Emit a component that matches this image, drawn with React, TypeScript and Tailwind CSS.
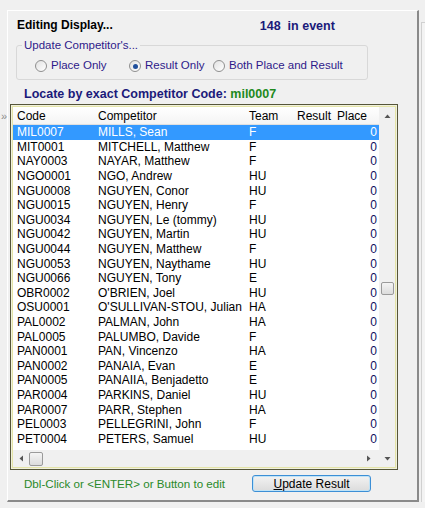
import React from 'react';

type Row = { code: string; name: string; team: string };

const rows: Row[] = [
  { code: 'MIL0007', name: 'MILLS, Sean', team: 'F' },
  { code: 'MIT0001', name: 'MITCHELL, Matthew', team: 'F' },
  { code: 'NAY0003', name: 'NAYAR, Matthew', team: 'F' },
  { code: 'NGO0001', name: 'NGO, Andrew', team: 'HU' },
  { code: 'NGU0008', name: 'NGUYEN, Conor', team: 'HU' },
  { code: 'NGU0015', name: 'NGUYEN, Henry', team: 'F' },
  { code: 'NGU0034', name: 'NGUYEN, Le (tommy)', team: 'HU' },
  { code: 'NGU0042', name: 'NGUYEN, Martin', team: 'HU' },
  { code: 'NGU0044', name: 'NGUYEN, Matthew', team: 'F' },
  { code: 'NGU0053', name: 'NGUYEN, Naythame', team: 'HU' },
  { code: 'NGU0066', name: 'NGUYEN, Tony', team: 'E' },
  { code: 'OBR0002', name: "O'BRIEN, Joel", team: 'HU' },
  { code: 'OSU0001', name: "O'SULLIVAN-STOU, Julian", team: 'HA' },
  { code: 'PAL0002', name: 'PALMAN, John', team: 'HA' },
  { code: 'PAL0005', name: 'PALUMBO, Davide', team: 'F' },
  { code: 'PAN0001', name: 'PAN, Vincenzo', team: 'HA' },
  { code: 'PAN0002', name: 'PANAIA, Evan', team: 'E' },
  { code: 'PAN0005', name: 'PANAIIA, Benjadetto', team: 'E' },
  { code: 'PAR0004', name: 'PARKINS, Daniel', team: 'HU' },
  { code: 'PAR0007', name: 'PARR, Stephen', team: 'HA' },
  { code: 'PEL0003', name: 'PELLEGRINI, John', team: 'F' },
  { code: 'PET0004', name: 'PETERS, Samuel', team: 'HU' },
];

const Radio: React.FC<{ checked?: boolean; label: string; className?: string }> = ({ checked, label, className }) => (
  <label className={`flex items-center gap-[4px] ${className ?? ''}`}>
    <span className="w-[12px] h-[12px] rounded-full border border-[#8f8f8f] bg-gradient-to-br from-[#e2e2e2] to-[#ffffff] flex items-center justify-center">
      {checked && <span className="w-[5px] h-[5px] rounded-full bg-[#1f4f9c]" />}
    </span>
    <span className="text-[#2e1a8a]">{label}</span>
  </label>
);

const App: React.FC = () => {
  return (
    <div
      className="relative w-[425px] h-[508px] bg-[#f0f0f0] overflow-hidden text-[12px] text-black"
      style={{ fontFamily: '"Liberation Sans", Arial, sans-serif' }}
    >
      {/* side edge of next panel */}
      <div className="absolute left-[421px] top-[22px] w-[6px] h-[480px] border-l border-t border-[#d0d0d0] bg-[#f3f3f3]" />

      <span className="absolute left-[1px] top-[108px] text-[11px] text-[#8a8a8a]">»</span>

      <div className="ml-[7px] mt-[10px] w-[412px] h-[492px] border-t border-l border-white border-r-2 border-b-2 border-r-[#8a8a8a] border-b-[#8a8a8a] flex flex-col">
        {/* header */}
        <div className="flex items-center h-[26px] pt-[1px]">
          <span className="ml-[9px] font-bold text-[12px]">Editing Display...</span>
          <span className="ml-[147px] mt-[4px] font-bold text-[12.5px] text-[#1a1a7a]">148&nbsp;&nbsp;in event</span>
        </div>

        {/* group box */}
        <div className="relative ml-[8px] mt-[8px] w-[352px] h-[35px] border border-[#d8d8d8] rounded-[3px]">
          <span className="absolute left-[5px] top-[-9px] px-[2px] bg-[#f0f0f0] text-[11.5px] text-[#2e1a8a]">Update Competitor's...</span>
          <div className="flex items-center h-full pt-[7px] pl-[18px] text-[11.5px]">
            <Radio label="Place Only" className="w-[94px]" />
            <Radio checked label="Result Only" className="w-[84px]" />
            <Radio label="Both Place and Result" />
          </div>
        </div>

        {/* locate */}
        <div className="ml-[16px] mt-[5px] h-[16px] font-bold text-[12.5px] text-[#1a1a7a]">
          Locate by exact Competitor Code: <span className="text-[#1e8a1e]">mil0007</span>
        </div>

        {/* grid */}
        <div className="ml-[2px] mt-[3px] w-[388px] h-[366px] border border-[#55553a] p-px bg-[#f0f0dc]">
          <div className="w-full h-full border border-[#e4e4a8] bg-white flex">
            <div className="flex-1 flex flex-col min-w-0">
              <div className="flex h-[18px] items-center bg-gradient-to-b from-white to-[#f4f4f4] border-b border-[#e0e0e0] shrink-0">
                <span className="w-[85px] pl-[4px]">Code</span>
                <span className="w-[151px]">Competitor</span>
                <span className="w-[48px]">Team</span>
                <span className="w-[40px]">Result</span>
                <span className="flex-1">Place</span>
              </div>
              <div className="flex-1 flex flex-col">
                {rows.map((r, i) => (
                  <div
                    key={r.code}
                    className={`flex items-center h-[14.6px] shrink-0 ${i === 0 ? 'bg-[#3399ff] text-white' : ''}`}
                  >
                    <span className="w-[85px] pl-[4px]">{r.code}</span>
                    <span className="w-[151px] whitespace-nowrap">{r.name}</span>
                    <span className="w-[48px]">{r.team}</span>
                    <span className="w-[40px]" />
                    <span className={`flex-1 text-right pr-[2px] ${i === 0 ? '' : 'text-[#101060]'}`}>0</span>
                  </div>
                ))}
              </div>
              {/* horizontal scrollbar */}
              <div className="h-[17px] shrink-0 bg-[#f0f0f0] flex items-center">
                <svg width="9" height="9" viewBox="0 0 9 9" className="ml-[4px]">
                  <path d="M6 1.5 L2.5 4.5 L6 7.5 Z" fill="#555" />
                </svg>
                <div className="ml-[3px] w-[14px] h-[14px] rounded-[2px] border border-[#9a9a9a] bg-gradient-to-b from-[#f4f4f4] to-[#dcdcdc]" />
                <div className="flex-1" />
                <svg width="9" height="9" viewBox="0 0 9 9" className="mr-[6px]">
                  <path d="M3 1.5 L6.5 4.5 L3 7.5 Z" fill="#555" />
                </svg>
              </div>
            </div>
            {/* vertical scrollbar */}
            <div className="w-[16px] shrink-0 bg-[#f0f0f0] flex flex-col items-center">
              <svg width="9" height="9" viewBox="0 0 9 9" className="mt-[5px]">
                <path d="M1.5 6 L4.5 2.5 L7.5 6 Z" fill="#555" />
              </svg>
              <div className="mt-[161px] w-[13px] h-[13px] rounded-[2px] border border-[#9a9a9a] bg-gradient-to-b from-[#f4f4f4] to-[#dcdcdc]" />
              <div className="flex-1" />
              <svg width="9" height="9" viewBox="0 0 9 9" className="mb-[4px]">
                <path d="M1.5 3 L4.5 6.5 L7.5 3 Z" fill="#555" />
              </svg>
            </div>
          </div>
        </div>

        {/* footer */}
        <div className="flex items-center mt-[5px]">
          <span className="ml-[16px] text-[11.6px] text-[#2a8a2a]">Dbl-Click or &lt;ENTER&gt; or Button to edit</span>
          <button className="ml-[27px] w-[119px] h-[17px] rounded-[3px] border border-[#3c8fd6] bg-gradient-to-b from-[#f2f2f2] to-[#dcdcdc] text-[12px] leading-none shadow-[inset_0_0_0_1px_#bfe3f7]">
            <span className="underline">U</span>pdate Result
          </button>
        </div>
      </div>
    </div>
  );
};

export default App;
